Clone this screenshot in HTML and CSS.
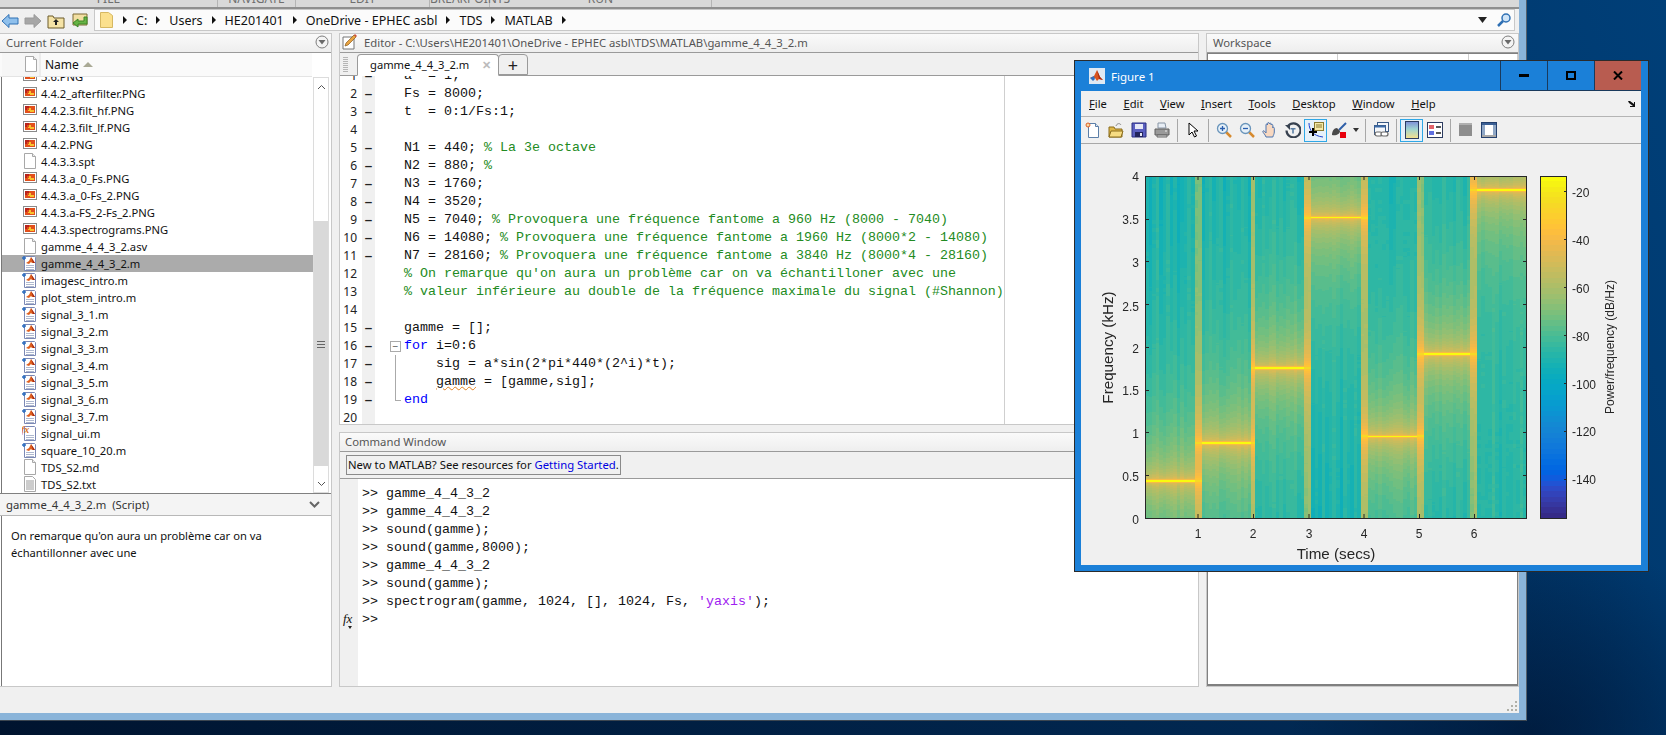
FILE: index.html
```html
<!DOCTYPE html>
<html lang="en">
<head>
  <meta charset="UTF-8"/>
  <title>MATLAB</title>
  <link rel="stylesheet" href="styles.css">
</head>
<body>

  <!-- Shared file icons -->
  <svg class="sprites" width="0" height="0">
    <symbol id="i-png" viewBox="0 0 16 16">
      <rect x="1.5" y="2.5" width="13" height="10" fill="#fff" stroke="#8a8a8a"/>
      <rect x="3" y="4" width="10" height="7" fill="#e2501c"/>
      <path d="M3 4h4v2H5v2H3z" fill="#b8241c"/>
      <path d="M7 6h2v2h3v2H8V9H6V8h1z" fill="#f7c32e"/>
    </symbol>
    <symbol id="i-doc" viewBox="0 0 16 16">
      <path d="M2.5 .5h8l3 3v12h-11z" fill="#fff" stroke="#a8a8a8"/>
      <path d="M10.5 .5v3h3" fill="#eee" stroke="#a8a8a8"/>
    </symbol>
    <symbol id="i-txt" viewBox="0 0 16 16">
      <path d="M2.5 .5h8l3 3v12h-11z" fill="#fff" stroke="#a8a8a8"/>
      <path d="M4 5h8M4 7h8M4 9h8M4 11h8M4 13h8" stroke="#9a9a9a"/>
    </symbol>
    <symbol id="i-m" viewBox="0 0 16 16">
      <path d="M2.500 1.500h10l1 1v13h-11z" fill="#fff" stroke="#7b88b5"/>
      <path d="M4 10.500h8M4 12.500h8M4 14.500h8" stroke="#aeb8cf"/>
      <path d="M4 8l3-2 2-4 2 3 2 3h-3l-1-1-2 2z" fill="#e0601e"/>
      <path d="M9 2l2 3 2 3h-2z" fill="#a52a14"/>
      <path d="M0 3h4M2 1v4" stroke="#2f6fc0" stroke-width="1.500"/>
    </symbol>
    <symbol id="i-fx" viewBox="0 0 16 16">
      <path d="M2.500 1.500h10l1 1v13h-11z" fill="#fff" stroke="#7b88b5"/>
      <path d="M4 10.500h8M4 12.500h8M4 14.500h8" stroke="#aeb8cf"/>
      <text x="-1" y="8" class="fx-mark">fx</text>
    </symbol>
    <symbol id="i-circle" viewBox="0 0 14 14">
      <circle cx="7" cy="7" r="6" fill="#f4f4f4" stroke="#7d7d7d"/>
      <path d="M3.500 5h7L7 9.500z" fill="#6a6a6a"/>
    </symbol>
    <symbol id="i-crumb" viewBox="0 0 6 10">
      <path d="M1 1l4 4-4 4z" fill="#111"/>
    </symbol>
  </svg>

  <div class="matlab">
    <!-- bottom of the ribbon, cut by the crop -->
    <div class="ribbon">
      <div class="rib rib-file">FILE</div>
      <div class="rib rib-nav">NAVIGATE</div>
      <div class="rib rib-edit">EDIT</div>
      <div class="rib rib-bp">BREAKPOINTS</div>
      <div class="rib rib-run">RUN</div>
    </div>

    <!-- Address bar -->
    <div class="addressbar">
      <div class="nav-icons">
        <svg width="18" height="16" viewBox="0 0 18 16"><path d="M1 8l7-6.500V5h9v6H8v3.500z" fill="#8fc0ec" stroke="#2f70b4"/></svg>
        <svg width="18" height="16" viewBox="0 0 18 16"><path d="M17 8l-7-6.500V5H1v6h9v3.500z" fill="#a6a6a6" stroke="#9a9a9a"/></svg>
        <svg width="18" height="16" viewBox="0 0 18 16"><path d="M1 3h5l1 2h10v10H1z" fill="#f5e3a6" stroke="#6b5a2a"/><path d="M9 6l3 3h-2v3H8V9H6z" fill="#222"/></svg>
        <svg width="18" height="16" viewBox="0 0 18 16"><path d="M3 1h14v11H3z" fill="#f2dfa2" stroke="#7c6a34"/><path d="M14 4v4H8V6L3 10l5 4v-3h9V4z" fill="#66b344" stroke="#3c8526"/></svg>
      </div>
      <div class="path-field">
        <svg class="path-folder" width="13" height="16" viewBox="0 0 13 16"><path d="M.5 .5h8l4 3v12H.5z" fill="#fbe08d" stroke="#d6b862"/></svg>
        <svg class="crumb" width="6" height="10"><use href="#i-crumb"/></svg><span>C:</span>
        <svg class="crumb" width="6" height="10"><use href="#i-crumb"/></svg><span>Users</span>
        <svg class="crumb" width="6" height="10"><use href="#i-crumb"/></svg><span>HE201401</span>
        <svg class="crumb" width="6" height="10"><use href="#i-crumb"/></svg><span>OneDrive - EPHEC asbl</span>
        <svg class="crumb" width="6" height="10"><use href="#i-crumb"/></svg><span>TDS</span>
        <svg class="crumb" width="6" height="10"><use href="#i-crumb"/></svg><span>MATLAB</span>
        <svg class="crumb" width="6" height="10"><use href="#i-crumb"/></svg>
        <div class="path-end">
          <svg width="9" height="6" viewBox="0 0 9 6"><path d="M0 0h9L4.500 6z" fill="#222"/></svg>
          <svg width="16" height="16" viewBox="0 0 16 16"><circle cx="10" cy="6" r="4" fill="#cfe4f7" stroke="#2f70b4" stroke-width="1.500"/><path d="M7 9l-5 5" stroke="#2f70b4" stroke-width="2.500"/></svg>
        </div>
      </div>
    </div>

    <div class="panels">
      <!-- Current Folder -->
      <section class="panel folder">
        <div class="panel-head"><span>Current Folder</span><svg width="14" height="14"><use href="#i-circle"/></svg></div>
        <div class="list-head">
          <div class="col-icon"><svg width="16" height="16"><use href="#i-doc"/></svg></div>
          <div class="col-name">Name <span class="sort-arrow"></span></div>
        </div>
        <div class="list-wrap">
          <div class="file-list">
            <div class="file clipped"><svg width="16" height="16"><use href="#i-png"/></svg>3.6.PNG</div>
            <div class="file"><svg width="16" height="16"><use href="#i-png"/></svg>4.4.2_afterfilter.PNG</div>
            <div class="file"><svg width="16" height="16"><use href="#i-png"/></svg>4.4.2.3.filt_hf.PNG</div>
            <div class="file"><svg width="16" height="16"><use href="#i-png"/></svg>4.4.2.3.filt_lf.PNG</div>
            <div class="file"><svg width="16" height="16"><use href="#i-png"/></svg>4.4.2.PNG</div>
            <div class="file"><svg width="16" height="16"><use href="#i-doc"/></svg>4.4.3.3.spt</div>
            <div class="file"><svg width="16" height="16"><use href="#i-png"/></svg>4.4.3.a_0_Fs.PNG</div>
            <div class="file"><svg width="16" height="16"><use href="#i-png"/></svg>4.4.3.a_0-Fs_2.PNG</div>
            <div class="file"><svg width="16" height="16"><use href="#i-png"/></svg>4.4.3.a-FS_2-Fs_2.PNG</div>
            <div class="file"><svg width="16" height="16"><use href="#i-png"/></svg>4.4.3.spectrograms.PNG</div>
            <div class="file"><svg width="16" height="16"><use href="#i-doc"/></svg>gamme_4_4_3_2.asv</div>
            <div class="file selected"><svg width="16" height="16"><use href="#i-m"/></svg>gamme_4_4_3_2.m</div>
            <div class="file"><svg width="16" height="16"><use href="#i-m"/></svg>imagesc_intro.m</div>
            <div class="file"><svg width="16" height="16"><use href="#i-m"/></svg>plot_stem_intro.m</div>
            <div class="file"><svg width="16" height="16"><use href="#i-m"/></svg>signal_3_1.m</div>
            <div class="file"><svg width="16" height="16"><use href="#i-m"/></svg>signal_3_2.m</div>
            <div class="file"><svg width="16" height="16"><use href="#i-m"/></svg>signal_3_3.m</div>
            <div class="file"><svg width="16" height="16"><use href="#i-m"/></svg>signal_3_4.m</div>
            <div class="file"><svg width="16" height="16"><use href="#i-m"/></svg>signal_3_5.m</div>
            <div class="file"><svg width="16" height="16"><use href="#i-m"/></svg>signal_3_6.m</div>
            <div class="file"><svg width="16" height="16"><use href="#i-m"/></svg>signal_3_7.m</div>
            <div class="file"><svg width="16" height="16"><use href="#i-fx"/></svg>signal_ui.m</div>
            <div class="file"><svg width="16" height="16"><use href="#i-m"/></svg>square_10_20.m</div>
            <div class="file"><svg width="16" height="16"><use href="#i-doc"/></svg>TDS_S2.md</div>
            <div class="file"><svg width="16" height="16"><use href="#i-txt"/></svg>TDS_S2.txt</div>
          </div>
          <div class="scrollbar">
            <div class="scroll-btn"><svg width="9" height="6" viewBox="0 0 9 6"><path d="M1 5l3.500-3.500L8 5" fill="none" stroke="#555"/></svg></div>
            <div class="scroll-gap"></div>
            <div class="scroll-thumb"><span></span><span></span><span></span></div>
            <div class="scroll-rest"></div>
            <div class="scroll-btn"><svg width="9" height="6" viewBox="0 0 9 6"><path d="M1 1l3.500 3.500L8 1" fill="none" stroke="#555"/></svg></div>
          </div>
        </div>
        <div class="details-head">
          <span>gamme_4_4_3_2.m &nbsp;(Script)</span>
          <svg width="11" height="7" viewBox="0 0 11 7"><path d="M1 1l4.500 4.500L10 1" fill="none" stroke="#666" stroke-width="2"/></svg>
        </div>
        <div class="details-body">
          On remarque qu'on aura un problème car on va<br>échantillonner avec une
        </div>
      </section>

      <div class="middle">
        <!-- Editor -->
        <section class="panel editor">
          <div class="panel-head">
            <svg width="16" height="16" viewBox="0 0 16 16"><path d="M1 3h11v12H1z" fill="#fff" stroke="#777"/><path d="M3 12l1-3 8-8 2 2-8 8z" fill="#e9a441" stroke="#8a5a1c" stroke-width=".7"/><path d="M12 1l2 2 1-1-2-2z" fill="#d24a3a"/></svg>
            <span class="editor-title">Editor - C:\Users\HE201401\OneDrive - EPHEC asbl\TDS\MATLAB\gamme_4_4_3_2.m</span>
          </div>
          <div class="tabs">
            <div class="tab-grip"></div>
            <div class="tab active">gamme_4_4_3_2.m <span class="tab-x">✕</span></div>
            <div class="tab plus">+</div>
          </div>
          <div class="code">
            <div class="margin-line"></div>
            <div class="line clipped-line"><span class="ln">1</span><span class="bp">–</span><span class="fold"></span><code>a  = 1;</code></div>
            <div class="line"><span class="ln">2</span><span class="bp">–</span><span class="fold"></span><code>Fs = 8000;</code></div>
            <div class="line"><span class="ln">3</span><span class="bp">–</span><span class="fold"></span><code>t  = 0:1/Fs:1;</code></div>
            <div class="line"><span class="ln">4</span><span class="bp"></span><span class="fold"></span><code></code></div>
            <div class="line"><span class="ln">5</span><span class="bp">–</span><span class="fold"></span><code>N1 = 440; <i>% La 3e octave</i></code></div>
            <div class="line"><span class="ln">6</span><span class="bp">–</span><span class="fold"></span><code>N2 = 880; <i>%</i></code></div>
            <div class="line"><span class="ln">7</span><span class="bp">–</span><span class="fold"></span><code>N3 = 1760;</code></div>
            <div class="line"><span class="ln">8</span><span class="bp">–</span><span class="fold"></span><code>N4 = 3520;</code></div>
            <div class="line"><span class="ln">9</span><span class="bp">–</span><span class="fold"></span><code>N5 = 7040; <i>% Provoquera une fréquence fantome a 960 Hz (8000 - 7040)</i></code></div>
            <div class="line"><span class="ln">10</span><span class="bp">–</span><span class="fold"></span><code>N6 = 14080; <i>% Provoquera une fréquence fantome a 1960 Hz (8000*2 - 14080)</i></code></div>
            <div class="line"><span class="ln">11</span><span class="bp">–</span><span class="fold"></span><code>N7 = 28160; <i>% Provoquera une fréquence fantome a 3840 Hz (8000*4 - 28160)</i></code></div>
            <div class="line"><span class="ln">12</span><span class="bp"></span><span class="fold"></span><code><i>% On remarque qu'on aura un problème car on va échantilloner avec une</i></code></div>
            <div class="line"><span class="ln">13</span><span class="bp"></span><span class="fold"></span><code><i>% valeur inférieure au double de la fréquence maximale du signal (#Shannon)</i></code></div>
            <div class="line"><span class="ln">14</span><span class="bp"></span><span class="fold"></span><code></code></div>
            <div class="line"><span class="ln">15</span><span class="bp">–</span><span class="fold"></span><code>gamme = [];</code></div>
            <div class="line"><span class="ln">16</span><span class="bp">–</span><span class="fold fold-open"><b>−</b></span><code><em>for</em> i=0:6</code></div>
            <div class="line"><span class="ln">17</span><span class="bp">–</span><span class="fold fold-line"></span><code>    sig = a*sin(2*pi*440*(2^i)*t);</code></div>
            <div class="line"><span class="ln">18</span><span class="bp">–</span><span class="fold fold-line"></span><code>    <u>gamme</u> = [gamme,sig];</code></div>
            <div class="line"><span class="ln">19</span><span class="bp">–</span><span class="fold fold-end"></span><code><em>end</em></code></div>
            <div class="line"><span class="ln">20</span><span class="bp"></span><span class="fold"></span><code></code></div>
          </div>
        </section>

        <!-- Command Window -->
        <section class="panel command">
          <div class="panel-head"><span>Command Window</span></div>
          <div class="banner">
            <div class="banner-box">New to MATLAB? See resources for <a>Getting Started</a>.</div>
          </div>
          <div class="console">
            <div class="cmd"><span class="prompt">&gt;&gt;</span><code>gamme_4_4_3_2</code></div>
            <div class="cmd"><span class="prompt">&gt;&gt;</span><code>gamme_4_4_3_2</code></div>
            <div class="cmd"><span class="prompt">&gt;&gt;</span><code>sound(gamme);</code></div>
            <div class="cmd"><span class="prompt">&gt;&gt;</span><code>sound(gamme,8000);</code></div>
            <div class="cmd"><span class="prompt">&gt;&gt;</span><code>gamme_4_4_3_2</code></div>
            <div class="cmd"><span class="prompt">&gt;&gt;</span><code>sound(gamme);</code></div>
            <div class="cmd"><span class="prompt">&gt;&gt;</span><code>spectrogram(gamme, 1024, [], 1024, Fs, <s>'yaxis'</s>);</code></div>
            <div class="cmd"><span class="fx">fx</span><span class="prompt">&gt;&gt;</span><code></code></div>
          </div>
        </section>
      </div>

      <!-- Workspace -->
      <section class="panel workspace">
        <div class="panel-head"><span>Workspace</span><svg width="14" height="14"><use href="#i-circle"/></svg></div>
        <div class="ws-table">
          <div class="ws-col ws-name"></div>
          <div class="ws-col ws-value"></div>
          <div class="ws-col ws-size"></div>
          <div class="ws-col"></div>
        </div>
      </section>
    </div>

    <div class="statusbar"><div class="grip"></div></div>
  </div>

  <!-- Figure window floating over the desktop -->
  <div class="figure">
    <div class="fig-title">
      <svg class="fig-logo" width="16" height="16" viewBox="0 0 16 16"><rect width="16" height="16" fill="#dfe9f3"/><path d="M1 10l4-2 3-6 3 7 3 3-4-1-2 2-2-3z" fill="#d9531e"/><path d="M8 2l3 7 3 3-4-1z" fill="#a52a14"/><path d="M1 10l4-2 1 3-2 2z" fill="#2f6fc0"/></svg>
      <span class="fig-name">Figure 1</span>
      <div class="win-btn"><svg width="10" height="3"><rect width="10" height="3" fill="#000"/></svg></div>
      <div class="win-btn"><svg width="10" height="9"><rect x="1" y="1" width="8" height="7" fill="none" stroke="#000" stroke-width="2"/></svg></div>
      <div class="win-btn close"><svg width="10" height="9" viewBox="0 0 10 9"><path d="M1 .5l8 8M9 .5l-8 8" stroke="#000" stroke-width="2"/></svg></div>
    </div>
    <div class="fig-menu">
      <span><u>F</u>ile</span><span><u>E</u>dit</span><span><u>V</u>iew</span><span><u>I</u>nsert</span><span><u>T</u>ools</span><span><u>D</u>esktop</span><span><u>W</u>indow</span><span><u>H</u>elp</span>
      <svg class="fig-dock" width="8" height="8" viewBox="0 0 8 8"><path d="M0 1h2l4 3V2h1v5H2V6h3L1 3z" fill="#111"/></svg>
    </div>
    <div class="fig-tools">
      <div class="tool"><svg width="16" height="16" viewBox="0 0 16 16"><path d="M3.500 1.500h7l3 3v11h-10z" fill="#fff" stroke="#5c7fa8"/><path d="M10.500 1.500v3h3" fill="#dce8f4" stroke="#5c7fa8"/><circle cx="3" cy="3" r="2" fill="#f6d9a0" stroke="#e0602a"/></svg></div>
      <div class="tool"><svg width="16" height="16" viewBox="0 0 16 16"><path d="M1 5h5l1 2h7v8H1z" fill="#e0b848" stroke="#8a6c1c"/><path d="M1 15l2-6h12l-2 6z" fill="#f7dc82" stroke="#8a6c1c"/><path d="M8 4c1-3 4-3 5-1" fill="none" stroke="#8a8a8a"/></svg></div>
      <div class="tool"><svg width="16" height="16" viewBox="0 0 16 16"><path d="M1 1h14v14H1z" fill="#5a5fc0" stroke="#2b2f80"/><rect x="4" y="2" width="8" height="5" fill="#e6e8f6"/><rect x="4" y="10" width="8" height="5" fill="#22245c"/><rect x="9" y="11" width="2" height="3" fill="#e6e8f6"/></svg></div>
      <div class="tool"><svg width="16" height="16" viewBox="0 0 16 16"><path d="M4 1h7l1 5H4z" fill="#e8eef5" stroke="#8895a5"/><path d="M1 7h14v6H1z" fill="#9a9a9a" stroke="#5f5f5f"/><path d="M3 13h10v2H3z" fill="#d4d4d4" stroke="#666"/><rect x="11" y="8.500" width="2" height="1" fill="#eee"/></svg></div>
      <div class="tool-sep"></div>
      <div class="tool"><svg width="16" height="16" viewBox="0 0 16 16"><path d="M4 1v12l3-3 2.500 5 2-1-2.500-5h4z" fill="#fff" stroke="#000"/></svg></div>
      <div class="tool-sep"></div>
      <div class="tool"><svg width="16" height="16" viewBox="0 0 16 16"><path d="M10 10l5 5" stroke="#d68a2e" stroke-width="2.500"/><circle cx="6.500" cy="6.500" r="5" fill="#e6f0f8" stroke="#6a95bb" stroke-width="1.300"/><path d="M4 6.500h5M6.500 4v5" stroke="#2a5fb0" stroke-width="1.300"/></svg></div>
      <div class="tool"><svg width="16" height="16" viewBox="0 0 16 16"><path d="M10 10l5 5" stroke="#d68a2e" stroke-width="2.500"/><circle cx="6.500" cy="6.500" r="5" fill="#e6f0f8" stroke="#6a95bb" stroke-width="1.300"/><path d="M4 6.500h5" stroke="#2a5fb0" stroke-width="1.300"/></svg></div>
      <div class="tool"><svg width="16" height="16" viewBox="0 0 16 16"><path d="M4 15c-1-3-4-5-3-6 1-1 2 1 3 2V3c0-1.500 1.500-1.500 1.500 0V1.500c0-1.200 1.800-1.200 1.800 0V2c0-1.200 1.800-1.200 1.800 0v1c0-1 1.700-1 1.700.3V6c0-1 1.500-1 1.500 .3V10c0 2-1 3-1.500 5z" fill="#f8d8c0" stroke="#4a74b0"/></svg></div>
      <div class="tool"><svg width="16" height="16" viewBox="0 0 16 16"><path d="M3 4a7 7 0 1 1-1.500 4.500" fill="none" stroke="#37414f" stroke-width="2.200"/><path d="M0 3h5v5z" fill="#37414f"/><path d="M5.500 6h5v1.500h-1.700v4H7.200v-4H5.500z" fill="#5a7fa5"/></svg></div>
      <div class="tool on"><svg width="16" height="16" viewBox="0 0 16 16"><rect x="6.500" y=".5" width="9" height="8" fill="#f6e9a8" stroke="#8a7a30"/><path d="M8 3h6M8 5h6" stroke="#8a7a30"/><path d="M1 1c0 7 4 13 14 14" fill="none" stroke="#1f3fd0"/><path d="M5 6v8M1 10h8" stroke="#000" stroke-width="2"/></svg></div>
      <div class="tool"><svg width="16" height="16" viewBox="0 0 16 16"><path d="M15 1L8 8" stroke="#2f5fa8" stroke-width="2"/><path d="M1 13c0-4 2-7 5-7l3 3c0 3-4 5-8 4z" fill="#4a4a4a"/><rect x="9" y="10" width="6" height="6" fill="#e8000c"/></svg></div>
      <div class="tool-drop"></div>
      <div class="tool-sep"></div>
      <div class="tool"><svg width="16" height="16" viewBox="0 0 16 16"><rect x="4.500" y=".5" width="11" height="9" fill="#f4f7fb" stroke="#3b5a85"/><rect x="1.500" y="3.500" width="11" height="9" fill="#f4f7fb" stroke="#3b5a85"/><rect x="1.500" y="3.500" width="11" height="2" fill="#3b6aa8"/><rect x="2" y="10" width="7" height="4" rx="2" fill="#fff" stroke="#666" stroke-width="1.200"/><rect x="8" y="10" width="7" height="4" rx="2" fill="#fff" stroke="#666" stroke-width="1.200"/></svg></div>
      <div class="tool-sep"></div>
      <div class="tool on"><svg width="14" height="18" viewBox="0 0 14 18"><defs><linearGradient id="cb" x1="0" y1="0" x2="0" y2="1"><stop offset="0" stop-color="#7d8ed8"/><stop offset=".45" stop-color="#9fd4d0"/><stop offset="1" stop-color="#f6e08c"/></linearGradient></defs><rect x=".5" y=".5" width="13" height="17" fill="url(#cb)" stroke="#2c3c60"/></svg></div>
      <div class="tool"><svg width="16" height="16" viewBox="0 0 16 16"><rect x=".5" y=".5" width="15" height="15" fill="#fff" stroke="#2c3c60"/><rect x="2" y="3" width="5" height="4" fill="#e2636a"/><rect x="2" y="9" width="5" height="4" fill="#5f6fe0"/><path d="M9 5h5M9 11h5" stroke="#222" stroke-width="1.300"/></svg></div>
      <div class="tool-sep"></div>
      <div class="tool"><svg width="14" height="14" viewBox="0 0 14 14"><rect width="13" height="13" fill="#8e8e8e"/><rect y="0" width="13" height="2" fill="#b0b0b0"/></svg></div>
      <div class="tool"><svg width="16" height="16" viewBox="0 0 16 16"><rect x=".5" y=".5" width="15" height="15" fill="#fff" stroke="#24406e"/><rect x="1" y="1" width="14" height="2" fill="#3a5f94"/><rect x="1" y="3" width="3" height="10" fill="#8fa7c6"/><rect x="12" y="3" width="3" height="10" fill="#8fa7c6"/><rect x="1" y="13" width="14" height="2" fill="#a8a8a8"/></svg></div>
    </div>
    <div class="fig-body">
      <canvas id="spectrogram" class="spec" width="382" height="342"></canvas>
      <canvas id="colorbar" class="cbar" width="27" height="342"></canvas>
      <svg class="axes" width="560" height="421" viewBox="1081 144 560 421">
        <rect x="1145.500" y="176.500" width="381" height="342" fill="none" stroke="#262626"/>
        <path d="M1198 518v-4M1253.500 518v-4M1309 518v-4M1364 518v-4M1419.500 518v-4M1474.500 518v-4M1198 176v4M1253.500 176v4M1309 176v4M1364 176v4M1419.500 176v4M1474.500 176v4" stroke="#262626"/>
        <path d="M1145 475.500h4M1145 432.500h4M1145 390.500h4M1145 347.500h4M1145 304.500h4M1145 261.500h4M1145 219.500h4M1527 475.500h-4M1527 432.500h-4M1527 390.500h-4M1527 347.500h-4M1527 304.500h-4M1527 261.500h-4M1527 219.500h-4" stroke="#262626"/>
        <g class="ticks tick-y">
          <text x="1139" y="524">0</text><text x="1139" y="481">0.5</text><text x="1139" y="438">1</text><text x="1139" y="395">1.5</text><text x="1139" y="353">2</text><text x="1139" y="311">2.5</text><text x="1139" y="267">3</text><text x="1139" y="224">3.5</text><text x="1139" y="181">4</text>
        </g>
        <g class="ticks tick-x">
          <text x="1198" y="538">1</text><text x="1253" y="538">2</text><text x="1309" y="538">3</text><text x="1364" y="538">4</text><text x="1419" y="538">5</text><text x="1474" y="538">6</text>
        </g>
        <text class="ax-label" x="1336" y="559">Time (secs)</text>
        <text class="ax-label" transform="translate(1113 347.500) rotate(-90)">Frequency (kHz)</text>
        <rect x="1540.500" y="176.500" width="26" height="342" fill="none" stroke="#262626"/>
        <path d="M1567 191.500h-3M1567 239.500h-3M1567 287.500h-3M1567 335.500h-3M1567 383.500h-3M1567 431.500h-3M1567 479.500h-3" stroke="#262626"/>
        <g class="ticks">
          <text x="1572" y="197">-20</text><text x="1572" y="245">-40</text><text x="1572" y="293">-60</text><text x="1572" y="341">-80</text><text x="1572" y="389">-100</text><text x="1572" y="436">-120</text><text x="1572" y="484">-140</text>
        </g>
        <text class="cb-label" transform="translate(1614 347) rotate(-90)">Power/frequency (dB/Hz)</text>
      </svg>
    </div>
  </div>

  <script src="script.js"></script>
</body>
</html>
```

FILE: styles.css
```css
* {
  margin: 0;
  padding: 0;
  box-sizing: border-box;
}

html, body {
  height: 735px;
  overflow: hidden;
}

body {
  background:
    radial-gradient(ellipse 240px 200px at 1530px 735px, rgba(0, 20, 50, 0.7), transparent),
    linear-gradient(70deg, #00142f 0%, #012a55 72%, #003a70 88%, #003f78 100%);
  font-family: "Noto Sans", sans-serif;
  font-size: 11.2px;
  color: #111;
}

.sprites {
  position: absolute;
}

.fx-mark {
  font: italic bold 10px "Liberation Serif", serif;
  fill: #d9731e;
}

/* main window */
.matlab {
  width: 1527px;
  height: 721px;
  background: #f0f0f0;
  border-right: 1px solid #55606b;
  border-bottom: 1px solid #3c4650;
  box-shadow: inset -7px -7px 0 #8ab4d9;
  padding: 0 7px 7px 0;
  display: flex;
  flex-direction: column;
}

.ribbon {
  height: 9px;
  flex: none;
  display: flex;
  background: #d9d9d9;
  border-bottom: 2px solid #8f8f8f;
  overflow: hidden;
}

.rib {
  height: 12px;
  line-height: 8px;
  text-align: center;
  color: #6f6f6f;
  font-size: 12px;
  border-right: 1px solid #b5b5b5;
  transform: translateY(-5px);
}

.rib-file { width: 218px; }
.rib-nav { width: 78px; }
.rib-edit { width: 134px; }
.rib-bp { width: 60px; }
.rib-run { width: 222px; }

.addressbar {
  height: 24px;
  flex: none;
  display: flex;
  align-items: flex-start;
}

.nav-icons {
  width: 94px;
  flex: none;
  display: flex;
  gap: 5px;
  padding: 4px 0 0 1px;
}

.path-field {
  flex: 1;
  height: 22px;
  background: #fbfbfb;
  border: 1px solid #c8c8c8;
  display: flex;
  align-items: center;
  font-size: 12.5px;
  padding-left: 5px;
  margin-right: 4px;
}

.path-folder {
  margin-right: 9px;
}

.crumb {
  margin: 0 8px 0 0;
}

.path-field span {
  margin-right: 8px;
}

.path-end {
  margin-left: auto;
  display: flex;
  align-items: center;
  gap: 9px;
  padding-right: 2px;
}

.panels {
  flex: 1;
  min-height: 0;
  display: flex;
  gap: 7px;
}

.panel {
  background: #fff;
  border: 1px solid #c8c8c8;
  display: flex;
  flex-direction: column;
  overflow: hidden;
}

.panel-head {
  height: 19px;
  flex: none;
  display: flex;
  align-items: center;
  justify-content: space-between;
  padding: 0 3px 2px 5px;
  background: linear-gradient(#fafafa, #eeeeee);
  border-bottom: 1px solid #9a9a9a;
  color: #555;
  font-size: 11.300px;
}

.folder {
  width: 332px;
  border-left: none;
  height: 654px;
}

.folder .panel-head {
  padding-left: 6px;
  padding-right: 2px;
}

.list-head {
  height: 24px;
  flex: none;
  display: flex;
  background: #fafafa;
  border-bottom: 1px solid #e4e4e4;
  padding-left: 2px;
  margin-right: 19px;
}

.col-icon {
  width: 39px;
  padding: 3px 0 0 21px;
  border-right: 2px solid #ececec;
  background: #f6f6f6;
}

.col-name {
  flex: 1;
  padding: 3px 0 0 4px;
  font-size: 12px;
}

.sort-arrow {
  display: inline-block;
  border: 5px solid transparent;
  border-top: none;
  border-bottom: 5px solid #a9a995;
  margin-left: 1px;
  vertical-align: 2px;
}

.list-wrap {
  height: 416px;
  flex: none;
  display: flex;
  overflow: hidden;
  border-left: 1px solid #fff;
}

.file-list {
  flex: 1;
  border-left: 1px solid #777;
  overflow: hidden;
}

.file {
  height: 17px;
  display: flex;
  align-items: center;
  gap: 3px;
  padding-left: 20px;
  white-space: nowrap;
}

.clipped {
  margin-top: -9.500px;
}

.file.selected {
  background: #ababab;
}

.scrollbar {
  width: 16px;
  margin: 0 2px 0 0;
  flex: none;
  display: flex;
  flex-direction: column;
  border: 1px solid #dcdcdc;
}

.scroll-btn {
  height: 17px;
  flex: none;
  display: flex;
  align-items: center;
  justify-content: center;
  background: #fff;
}

.scroll-gap {
  height: 126px;
  background: #fff;
}

.scroll-thumb {
  height: 245px;
  background: #d9d9d9;
  display: flex;
  flex-direction: column;
  align-items: center;
  justify-content: center;
  gap: 1px;
}

.scroll-thumb span {
  width: 8px;
  height: 1px;
  background: #666;
  margin: 1px 0 0;
}

.scroll-rest {
  flex: 1;
  background: #fff;
}

.details-head {
  height: 23px;
  flex: none;
  display: flex;
  align-items: center;
  justify-content: space-between;
  padding: 0 11px 0 6px;
  background: #f4f4f4;
  border-top: 1px solid #808080;
  border-bottom: 1px solid #b8b8b8;
  font-size: 11.300px;
  color: #333;
}

.details-body {
  flex: 1;
  padding: 11px 0 0 9px;
  margin-left: 1px;
  border-left: 1px solid #777;
  line-height: 17px;
}

.middle {
  flex: 1;
  min-width: 0;
  height: 654px;
  display: flex;
  flex-direction: column;
  gap: 7px;
}

.editor {
  height: 392px;
  flex: none;
}

.editor .panel-head {
  justify-content: flex-start;
  gap: 6px;
  padding-left: 2px;
}

.editor-title {
  white-space: nowrap;
}

.tabs {
  height: 23px;
  flex: none;
  display: flex;
  align-items: flex-end;
  background: #f0f0f0;
  border-bottom: 1px solid #9a9a9a;
}

.tab-grip {
  width: 17px;
  height: 16px;
  margin-bottom: 2px;
  background: repeating-linear-gradient(#b5b5b5 0 1px, transparent 1px 2px) 3px 0 / 5px 100% no-repeat;
}

.tab {
  height: 22px;
  margin-bottom: -1px;
  border: 1px solid #9a9a9a;
  border-radius: 4px 4px 0 0;
  display: flex;
  align-items: center;
}

.tab.active {
  width: 142px;
  background: #fff;
  border-bottom-color: #fff;
  padding: 0 7px 2px 12px;
  justify-content: space-between;
  font-size: 11.200px;
}

.tab-x {
  color: #bbb;
  font-size: 11px;
  font-weight: bold;
}

.tab.plus {
  width: 30px;
  margin-left: -1px;
  margin-bottom: 0;
  height: 21px;
  justify-content: center;
  background: #f0f0f0;
  font-size: 18px;
  color: #222;
}

.code {
  flex: 1;
  min-height: 0;
  overflow: hidden;
  position: relative;
  font-family: "Liberation Mono", monospace;
  font-size: 13.330px;
}

.margin-line {
  position: absolute;
  left: 664px;
  top: 0;
  bottom: 0;
  width: 1px;
  background: #cfcfcf;
}

.line {
  height: 18px;
  display: flex;
  line-height: 18px;
  white-space: pre;
}

.clipped-line {
  margin-top: -9px;
}

.ln {
  width: 22px;
  flex: none;
  text-align: right;
  padding-right: 5px;
  font-family: "Noto Sans", sans-serif;
  font-size: 12px;
  color: #222;
}

.bp {
  width: 13px;
  flex: none;
  background: #f0f0f0;
  text-align: center;
  font-family: "Liberation Sans", sans-serif;
  font-weight: bold;
  color: #222;
}

.fold {
  width: 29px;
  flex: none;
}

.fold-open b {
  display: block;
  width: 11px;
  height: 11px;
  margin: 4px 0 0 15px;
  border: 1px solid #aaa;
  font: 10px/9px "Liberation Sans", sans-serif;
  text-align: center;
  color: #555;
}

.fold-line::before,
.fold-end::before {
  content: "";
  display: block;
  margin-left: 20px;
  border-left: 1px solid #aaa;
}

.fold-line::before {
  height: 18px;
}

.fold-end::before {
  width: 5px;
  height: 9px;
  border-bottom: 1px solid #aaa;
}

code {
  font: inherit;
}

code i {
  font-style: normal;
  color: #228b22;
}

code em {
  font-style: normal;
  color: #0000ff;
}

code u {
  text-decoration: underline wavy #e0801e 1px;
}

code s {
  text-decoration: none;
  color: #a020f0;
}

.command {
  flex: 1;
  min-height: 0;
}

.banner {
  height: 27px;
  flex: none;
  background: #f0f0f0;
  border-bottom: 1px solid #9a9a9a;
  padding: 3px 0 0 6px;
}

.banner-box {
  width: 275px;
  height: 20px;
  line-height: 18px;
  border: 1px solid #8a8a8a;
  padding-left: 1px;
  white-space: nowrap;
  font-size: 11.300px;
}

.banner-box a {
  color: #0000e0;
}

.console {
  flex: 1;
  background: linear-gradient(to right, #f0f0f0 18px, #fff 18px);
  padding-top: 6px;
  font-family: "Liberation Mono", monospace;
  font-size: 13.330px;
}

.cmd {
  height: 18px;
  line-height: 18px;
  display: flex;
  padding-left: 22px;
  position: relative;
}

.prompt {
  width: 24px;
  flex: none;
}

.fx {
  position: absolute;
  left: 3px;
  top: -1px;
  font: italic 13px/18px "Liberation Serif", serif;
}

.fx::after {
  content: "";
  position: absolute;
  left: 5px;
  top: 16px;
  border: 2px solid transparent;
  border-top: 3px solid #222;
  border-bottom: none;
}

.workspace {
  width: 313px;
  height: 654px;
  flex: none;
}

.workspace .panel-head {
  padding-left: 6px;
  padding-right: 3px;
}

.ws-table {
  flex: 1;
  display: flex;
  border: 1px solid #808080;
  border-width: 1px 1px 2px;
}

.ws-col {
  flex: 1;
  height: 14px;
  background: #fff;
  border-right: 1px solid #cfcfcf;
}

.ws-name { flex: none; width: 130px; }
.ws-value { flex: none; width: 131px; }
.ws-size { flex: none; width: 49px; }

.statusbar {
  height: 26px;
  flex: none;
  display: flex;
  justify-content: flex-end;
  align-items: flex-end;
  padding: 0 2px 2px 0;
}

.grip {
  width: 10px;
  height: 10px;
  background:
    linear-gradient(#b0b0a8, #b0b0a8) 8px 0 / 2px 2px no-repeat,
    linear-gradient(#b0b0a8, #b0b0a8) 4px 4px / 2px 2px no-repeat,
    linear-gradient(#b0b0a8, #b0b0a8) 8px 4px / 2px 2px no-repeat,
    linear-gradient(#b0b0a8, #b0b0a8) 0 8px / 2px 2px no-repeat,
    linear-gradient(#b0b0a8, #b0b0a8) 4px 8px / 2px 2px no-repeat,
    linear-gradient(#b0b0a8, #b0b0a8) 8px 8px / 2px 2px no-repeat;
}

/* figure window */
.figure {
  position: absolute;
  left: 1074px;
  top: 60px;
  width: 575px;
  height: 512px;
  background: #1b80d8;
  border: 1px solid #2b2b2b;
  padding: 0 7px 6px 6px;
  display: flex;
  flex-direction: column;
}

.fig-title {
  height: 30px;
  flex: none;
  display: flex;
  align-items: center;
  color: #fff;
  font-size: 11.500px;
}

.fig-logo {
  margin-left: 8px;
  margin-right: 6px;
}

.fig-name {
  margin-right: auto;
}

.win-btn {
  width: 47px;
  height: 30px;
  display: flex;
  align-items: center;
  justify-content: center;
  border-left: 1px solid #1a3a5c;
  border-bottom: 1px solid #1a3a5c;
}

.win-btn.close {
  background: #b85c50;
}

.fig-menu {
  height: 26px;
  flex: none;
  display: flex;
  align-items: center;
  gap: 16.500px;
  padding-left: 8px;
  background: #f0f0f0;
  border-bottom: 1px solid #b4b4b4;
  color: #111;
}

.fig-dock {
  margin-left: auto;
  margin-right: 5px;
}

.fig-tools {
  height: 27px;
  flex: none;
  display: flex;
  align-items: center;
  background: #f0f0f0;
  border-bottom: 1px solid #a8a8a8;
}

.tool {
  width: 23px;
  height: 23px;
  flex: none;
  display: flex;
  align-items: center;
  justify-content: center;
  border: 1px solid transparent;
}

.tool.on {
  border-color: #2fa7e6;
  background: #e6f1fa;
}

.tool-sep {
  width: 1px;
  height: 23px;
  margin: 0 3.500px;
  background: #a8a8a8;
  flex: none;
}

.tool-drop {
  width: 0;
  height: 0;
  margin: 0 2px 0 3px;
  border: 3px solid transparent;
  border-top: 4px solid #333;
  border-bottom: none;
}

.fig-body {
  flex: 1;
  min-height: 0;
  background: #f0f0f0;
  position: relative;
}

.spec {
  position: absolute;
  left: 64px;
  top: 32px;
}

.cbar {
  position: absolute;
  left: 459px;
  top: 32px;
}

.axes {
  position: absolute;
  left: 0;
  top: 0;
}

.ticks text {
  font: 12px "Liberation Sans", sans-serif;
  fill: #262626;
}

.tick-y text {
  text-anchor: end;
}

.tick-x text {
  text-anchor: middle;
}

.ax-label {
  font: 15.200px "Liberation Sans", sans-serif;
  fill: #262626;
  text-anchor: middle;
}

.cb-label {
  font: 12px "Liberation Sans", sans-serif;
  fill: #262626;
  text-anchor: middle;
}
```

FILE: script.js
```js
// parula, 64 levels
const parula = [
  [.2081,.1663,.5292],[.2116,.1898,.5777],[.2123,.2138,.6270],[.2081,.2386,.6771],
  [.1959,.2645,.7279],[.1707,.2919,.7792],[.1253,.3242,.8303],[.0591,.3598,.8683],
  [.0117,.3875,.8820],[.0060,.4086,.8828],[.0165,.4266,.8786],[.0329,.4430,.8720],
  [.0498,.4586,.8641],[.0629,.4737,.8554],[.0723,.4887,.8467],[.0779,.5040,.8384],
  [.0793,.5200,.8312],[.0749,.5375,.8263],[.0641,.5570,.8240],[.0488,.5772,.8228],
  [.0343,.5966,.8199],[.0265,.6137,.8135],[.0239,.6287,.8038],[.0231,.6418,.7913],
  [.0228,.6535,.7768],[.0267,.6642,.7607],[.0384,.6743,.7436],[.0590,.6838,.7254],
  [.0843,.6928,.7062],[.1133,.7015,.6859],[.1453,.7098,.6646],[.1801,.7177,.6424],
  [.2178,.7250,.6193],[.2586,.7317,.5954],[.3022,.7376,.5712],[.3482,.7424,.5473],
  [.3953,.7459,.5244],[.4420,.7481,.5033],[.4871,.7491,.4840],[.5300,.7491,.4661],
  [.5709,.7485,.4494],[.6099,.7473,.4337],[.6473,.7456,.4188],[.6834,.7435,.4044],
  [.7184,.7411,.3905],[.7525,.7384,.3768],[.7858,.7356,.3633],[.8185,.7327,.3498],
  [.8507,.7299,.3360],[.8824,.7274,.3217],[.9139,.7258,.3063],[.9450,.7261,.2886],
  [.9739,.7314,.2666],[.9938,.7455,.2403],[.9990,.7653,.2164],[.9955,.7861,.1967],
  [.9880,.8066,.1794],[.9789,.8271,.1633],[.9697,.8481,.1475],[.9626,.8705,.1309],
  [.9589,.8949,.1132],[.9598,.9218,.0948],[.9661,.9514,.0755],[.9763,.9831,.0538]
];

const DB_MIN = -156.25, DB_MAX = -13.75;

function dbColor(v) {
  let i = Math.floor((v - DB_MIN) / (DB_MAX - DB_MIN) * 64);
  i = Math.max(0, Math.min(63, i));
  const c = parula[i];
  return [c[0] * 255, c[1] * 255, c[2] * 255];
}

// stripe level of each time column, read off the reference
const levels = { a: -87, b: -92, c: -102, d: -110, e: -118, f: -83, n: -89 };
const stripes =
  "bcbacbaebcdbab" + "xo" +
  "cbadbacbabcabd" + "o" +
  "bcabcabacbabde" + "xo" +
  "cbdacbabcabdab" + "oo" +
  "nnnnnncdnnnnnn" + "ox" +
  "babcbaccdabca" + "xo" +
  "nannfnbannanfnn";

// which tone sounds at which column, with its frequency in kHz
const tones = [
  { from: 0, to: 15, f: 0.44 },
  { from: 15, to: 30, f: 0.88 },
  { from: 30, to: 46, f: 1.76 },
  { from: 46, to: 62, f: 3.52 },
  { from: 62, to: 78, f: 0.96 },
  { from: 77, to: 93, f: 1.92 },
  { from: 93, to: 108, f: 3.84 }
];

let seed = 7;
function rnd() {
  seed = (seed * 16807) % 2147483647;
  return seed / 2147483647;
}

function sumDb(a, b) {
  return 10 * Math.log10(Math.pow(10, a / 10) + Math.pow(10, b / 10));
}

function drawSpectrogram() {
  const canvas = document.getElementById("spectrogram");
  const ctx = canvas.getContext("2d");
  const w = canvas.width, h = canvas.height;
  const img = ctx.createImageData(w, h);
  const colW = w / 108;

  // one value grid per column, then painted over its pixels
  for (let col = 0; col < 108; col++) {
    const kind = stripes[col] || "b";
    const isBoundary = kind === "o" || kind === "x";
    const colTones = tones.filter(t => col >= t.from - (isBoundary ? 1 : 0) && col < t.to + (isBoundary ? 1 : 0));
    const haloShift = (rnd() - 0.5) * 5;
    const values = [];
    let blockNoise = 0;

    for (let y = 0; y < h; y++) {
      if (y % 4 === 0) blockNoise = (rnd() - 0.5) * 2.5;
      let base;
      if (kind === "o") base = -64 - (col < 20 ? 9 : 0);
      else if (kind === "x") base = Math.floor(y / 8) % 2 ? -98 : -72;
      else base = levels[kind];

      let v = base + blockNoise;
      colTones.forEach(t => {
        const ty = h * (1 - t.f / 4);
        const d = Math.abs(y - ty);
        let halo = -42 - 11.5 * Math.log(1 + d / 3) + haloShift;
        if (isBoundary) halo = -32 - 13 * Math.log(1 + d / 8);
        v = sumDb(v, halo);
        if (!isBoundary) {
          if (d <= 0.9) v = -14;
          else if (d <= 1.9) v = Math.max(v, -40);
        } else if (d <= 1) {
          v = -26;
        }
      });
      values.push(v);
    }

    const x0 = Math.round(col * colW), x1 = Math.round((col + 1) * colW);
    for (let x = x0; x < x1 && x < w; x++) {
      for (let y = 0; y < h; y++) {
        const c = dbColor(values[y]);
        const p = (y * w + x) * 4;
        img.data[p] = c[0];
        img.data[p + 1] = c[1];
        img.data[p + 2] = c[2];
        img.data[p + 3] = 255;
      }
    }
  }
  ctx.putImageData(img, 0, 0);
}

function drawColorbar() {
  const canvas = document.getElementById("colorbar");
  const ctx = canvas.getContext("2d");
  for (let y = 0; y < canvas.height; y++) {
    const v = DB_MAX - (y + 0.5) / canvas.height * (DB_MAX - DB_MIN);
    const c = dbColor(v);
    ctx.fillStyle = `rgb(${c[0]},${c[1]},${c[2]})`;
    ctx.fillRect(0, y, canvas.width, 1);
  }
}

drawSpectrogram();
drawColorbar();
```
